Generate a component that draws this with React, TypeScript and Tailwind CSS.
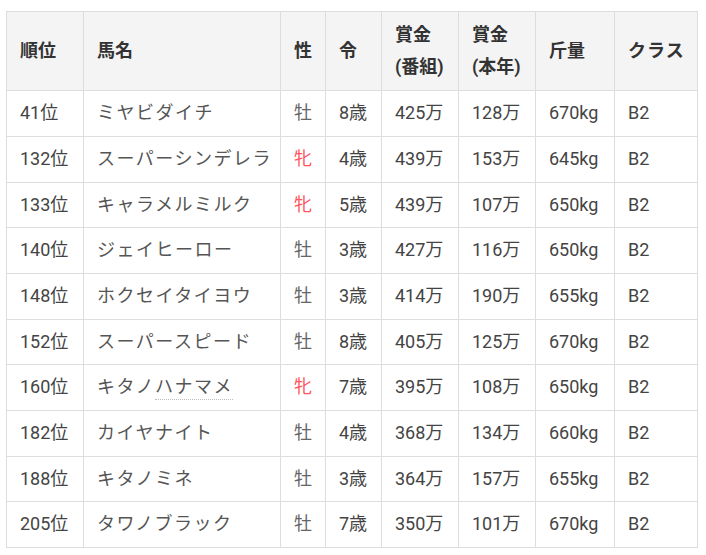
const rows = [
  { rank: "41位", name: "ミヤビダイチ", sex: "牡", age: "8歳", prize: "425万", year: "128万", weight: "670kg", cls: "B2" },
  { rank: "132位", name: "スーパーシンデレラ", sex: "牝", age: "4歳", prize: "439万", year: "153万", weight: "645kg", cls: "B2" },
  { rank: "133位", name: "キャラメルミルク", sex: "牝", age: "5歳", prize: "439万", year: "107万", weight: "650kg", cls: "B2" },
  { rank: "140位", name: "ジェイヒーロー", sex: "牡", age: "3歳", prize: "427万", year: "116万", weight: "650kg", cls: "B2" },
  { rank: "148位", name: "ホクセイタイヨウ", sex: "牡", age: "3歳", prize: "414万", year: "190万", weight: "655kg", cls: "B2" },
  { rank: "152位", name: "スーパースピード", sex: "牡", age: "8歳", prize: "405万", year: "125万", weight: "670kg", cls: "B2" },
  { rank: "160位", name: "キタノハナマメ", sex: "牝", age: "7歳", prize: "395万", year: "108万", weight: "650kg", cls: "B2" },
  { rank: "182位", name: "カイヤナイト", sex: "牡", age: "4歳", prize: "368万", year: "134万", weight: "660kg", cls: "B2" },
  { rank: "188位", name: "キタノミネ", sex: "牡", age: "3歳", prize: "364万", year: "157万", weight: "655kg", cls: "B2" },
  { rank: "205位", name: "タワノブラック", sex: "牡", age: "7歳", prize: "350万", year: "101万", weight: "670kg", cls: "B2" },
];

const th = "border border-[#dddddd] px-[13px] py-[6.5px] text-left align-middle font-bold text-[#333333] whitespace-nowrap";
const td = "border border-[#dddddd] px-[13px] py-[6px] text-left align-middle whitespace-nowrap";

function HorseName({ name }: { name: string }) {
  if (name === "キタノハナマメ") {
    return (
      <>
        キタノ
        <span className="border-b border-dotted border-[#bbbbbb] pb-[2px]">ハナマメ</span>
      </>
    );
  }
  return <>{name}</>;
}

export default function App() {
  return (
    <div
      className="min-h-screen bg-white pl-[6px] pt-[11px]"
      style={{ fontFamily: 'Roboto, "Noto Sans CJK JP", sans-serif' }}
    >
      <table className="w-[691px] table-fixed border-collapse text-[18px] leading-[32.65px] text-[#444444]">
        <colgroup>
          <col className="w-[77px]" />
          <col className="w-[197px]" />
          <col className="w-[45px]" />
          <col className="w-[56px]" />
          <col className="w-[77px]" />
          <col className="w-[77px]" />
          <col className="w-[79px]" />
          <col className="w-[83px]" />
        </colgroup>
        <thead className="bg-[#f4f4f4]">
          <tr>
            <th className={th}>順位</th>
            <th className={th}>馬名</th>
            <th className={th}>性</th>
            <th className={th}>令</th>
            <th className={th}>
              賞金
              <br />
              (番組)
            </th>
            <th className={th}>
              賞金
              <br />
              (本年)
            </th>
            <th className={th}>斤量</th>
            <th className={`${th} tracking-[1px]`}>クラス</th>
          </tr>
        </thead>
        <tbody>
          {rows.map((r) => (
            <tr key={r.rank}>
              <td className={td}>{r.rank}</td>
              <td className={`${td} tracking-[1.5px] text-[#555555]`}>
                <HorseName name={r.name} />
              </td>
              <td className={`${td} ${r.sex === "牝" ? "text-[#ff5560]" : "text-[#666666]"}`}>{r.sex}</td>
              <td className={td}>{r.age}</td>
              <td className={td}>{r.prize}</td>
              <td className={td}>{r.year}</td>
              <td className={td}>{r.weight}</td>
              <td className={td}>{r.cls}</td>
            </tr>
          ))}
        </tbody>
      </table>
    </div>
  );
}
